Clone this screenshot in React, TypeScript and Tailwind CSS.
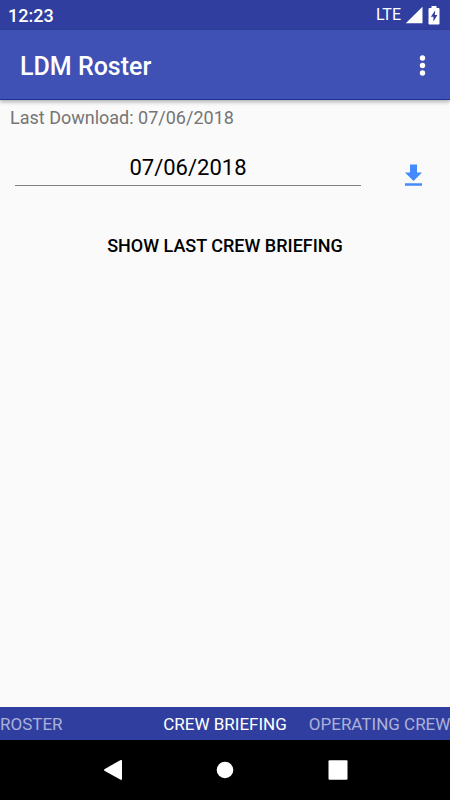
import { useState } from "react";

const tabs = [
  { name: "ROSTER", style: "text-left" },
  { name: "CREW BRIEFING", style: "text-center" },
  { name: "OPERATING CREW", style: "pl-[22px] text-left" },
];

function StatusBar() {
  return (
    <div className="flex h-[30px] items-center bg-[#303f9f] pl-2 pr-[10px] text-white">
      <span className="pt-px text-lg leading-6 font-medium">12:23</span>
      <div className="ml-auto flex items-center">
        <span className="text-base leading-6">LTE</span>
        <svg className="ml-1 h-[18px] w-[18px]" viewBox="0 0 18 18" fill="currentColor">
          <path d="M17.5 .8V17.3H.8z" />
        </svg>
        <svg className="ml-[5px] h-5 w-3" viewBox="0 0 12 20">
          <path
            d="M3.5 1h5v2h2q1 0 1 1v14.5q0 1-1 1h-9q-1 0-1-1V4q0-1 1-1h2z"
            fill="currentColor"
          />
          <path d="M7.2 5.5 2.8 11.8h2.6v4.7l4-6.5H6.8z" fill="#303f9f" />
        </svg>
      </div>
    </div>
  );
}

function AppBar() {
  return (
    <header className="z-10 flex h-[70px] items-center border-b border-[#1e2f9c] bg-[#3f51b5] pl-5 pr-[18px] text-white shadow-[0_2px_4px_rgba(0,0,0,0.3)]">
      <h1 className="pt-1 text-[25px] leading-8 font-medium">LDM Roster</h1>
      <button type="button" aria-label="More options" className="ml-auto">
        <svg className="h-6 w-5" viewBox="0 0 20 24" fill="currentColor">
          <circle cx="10.5" cy="5" r="2.7" />
          <circle cx="10.5" cy="12.5" r="2.7" />
          <circle cx="10.5" cy="20" r="2.7" />
        </svg>
      </button>
    </header>
  );
}

export default function App() {
  const [active, setActive] = useState("CREW BRIEFING");
  const [date, setDate] = useState("07/06/2018");

  return (
    <div className="flex min-h-screen flex-col bg-[#fafafa] font-[Roboto,sans-serif]">
      <StatusBar />
      <AppBar />

      <main className="flex flex-1 flex-col">
        <p className="px-[10px] pt-[6px] text-lg leading-6 text-[#757575]">
          Last Download: 07/06/2018
        </p>

        {/* Date + download */}
        <div className="mt-[19px] flex items-center pl-[15px] pr-[27px]">
          <input
            type="text"
            aria-label="Briefing date"
            value={date}
            onChange={(e) => setDate(e.target.value)}
            className="h-9 min-w-0 flex-1 border-b border-[#808080] text-center text-[22px] leading-8 text-black outline-none"
          />
          <button type="button" aria-label="Download" className="mt-[14px] ml-[42px]">
            <svg className="h-6 w-5" viewBox="0 0 20 24" fill="#448aff">
              <path d="M7 1.5h7v8h5L10.5 18 2 9.5h5zM2 20.3h17v2.5H2z" />
            </svg>
          </button>
        </div>

        <button
          type="button"
          className="mt-[39px] self-center px-4 py-2 text-lg leading-6 font-medium text-black"
        >
          SHOW LAST CREW BRIEFING
        </button>
      </main>

      <nav className="grid h-[33px] grid-cols-[minmax(0,1fr)_auto_minmax(0,1fr)] items-center bg-[#303f9f] text-[17px] leading-6 text-white">
        {tabs.map((tab) => (
          <button
            key={tab.name}
            type="button"
            onClick={() => setActive(tab.name)}
            className={`overflow-hidden whitespace-nowrap ${tab.style} ${
              active === tab.name ? "" : "text-white/60"
            }`}
          >
            {tab.name}
          </button>
        ))}
      </nav>

      {/* System navigation */}
      <div className="grid h-[60px] grid-cols-3 place-items-center bg-black px-[12.5%] text-white">
        <button type="button" aria-label="Back">
          <svg className="h-5 w-5" viewBox="0 0 20 20" fill="currentColor">
            <path d="M17.2.2q1.8-.8 1.8 1v17.6q0 1.8-1.8.8L1.8 11q-1.6-1 0-2z" />
          </svg>
        </button>
        <button type="button" aria-label="Home">
          <svg className="h-5 w-5" viewBox="0 0 20 20" fill="currentColor">
            <circle cx="10" cy="10" r="8.3" />
          </svg>
        </button>
        <button type="button" aria-label="Overview">
          <svg className="h-5 w-5" viewBox="0 0 20 20" fill="currentColor">
            <rect x=".5" y=".3" width="19" height="19.4" rx="1" />
          </svg>
        </button>
      </div>
    </div>
  );
}
